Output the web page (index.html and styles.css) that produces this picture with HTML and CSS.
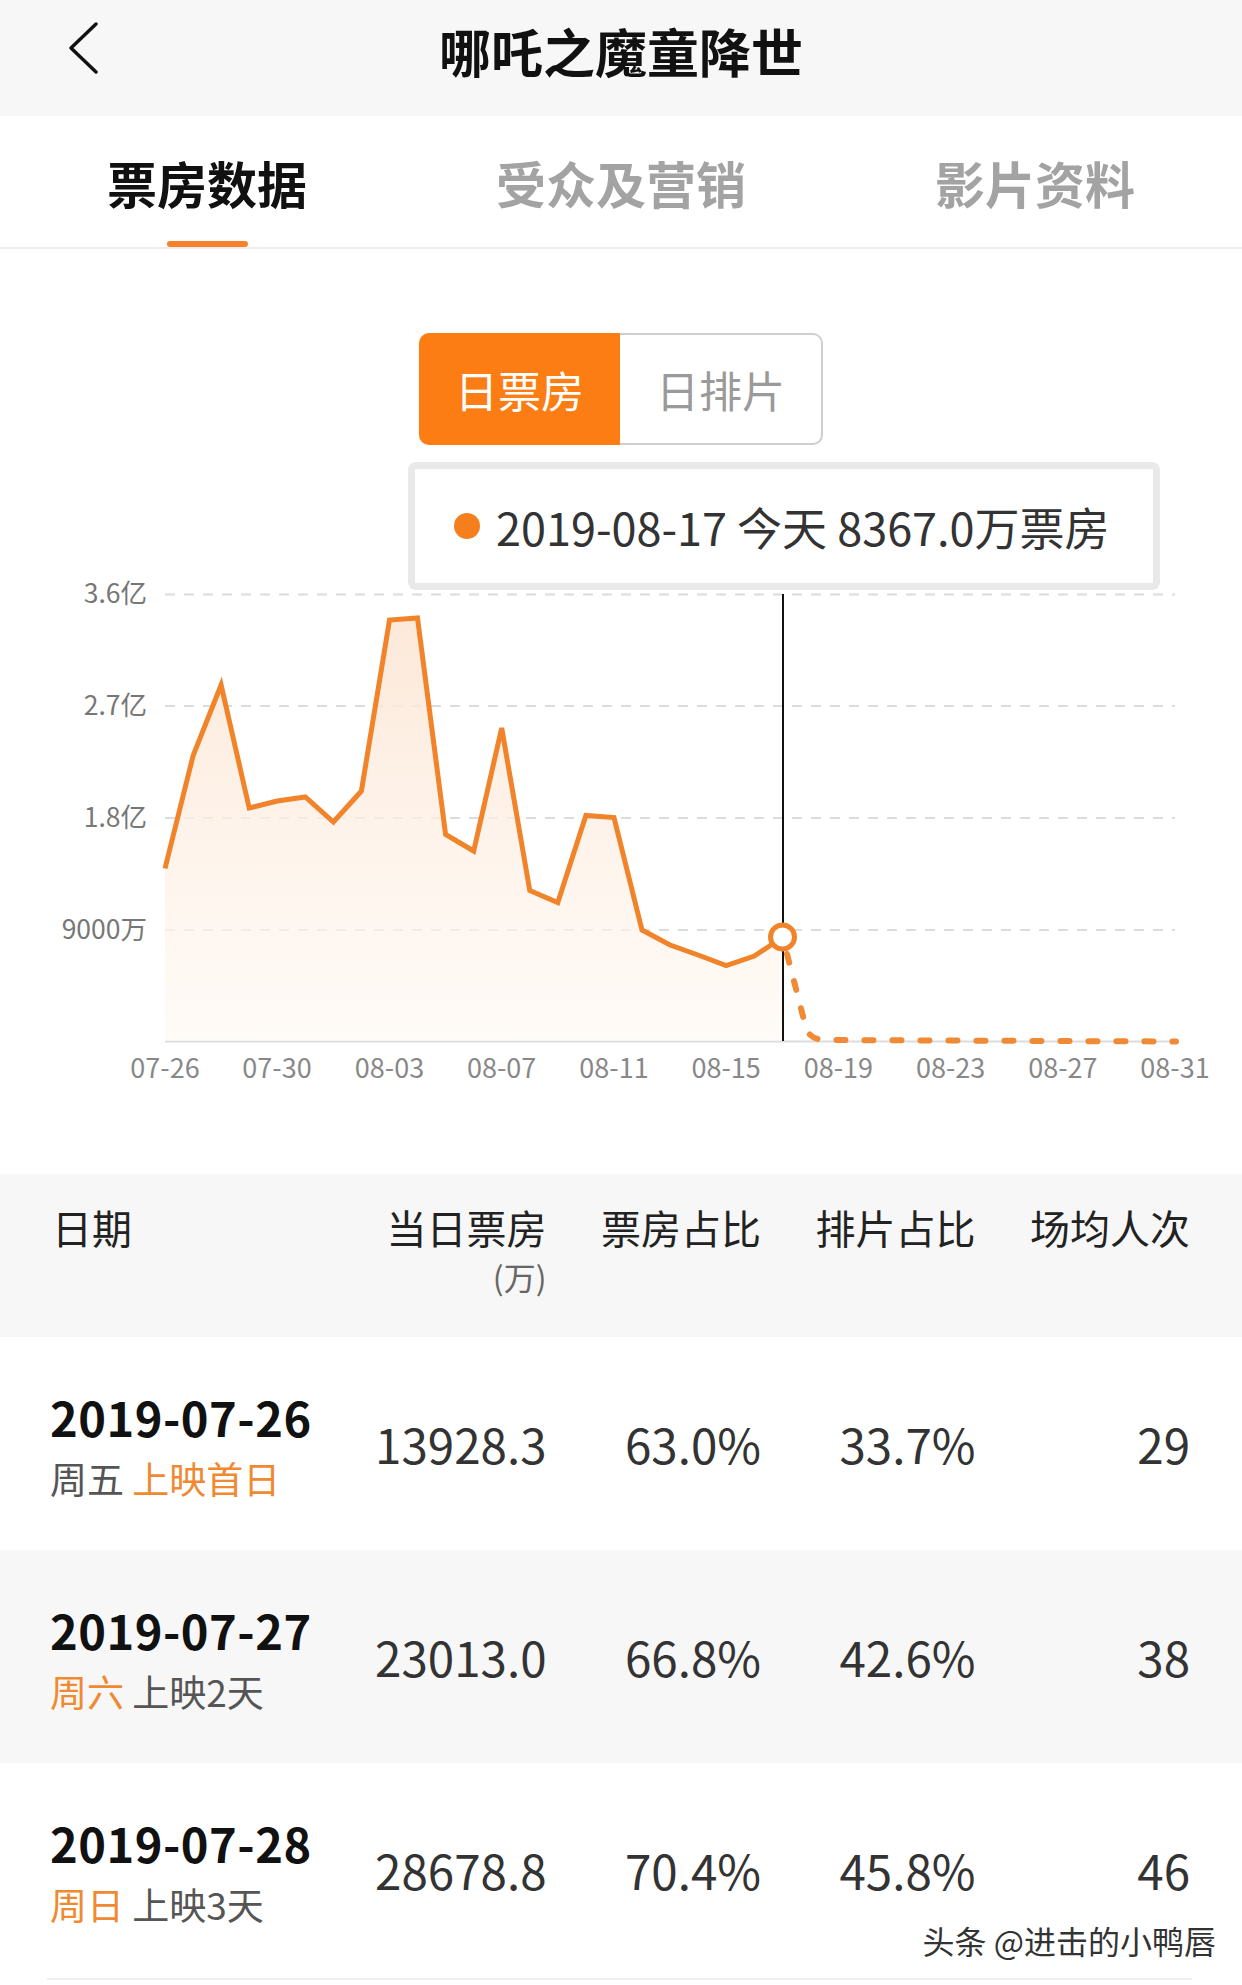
FILE: index.html
```html
<!DOCTYPE html>
<html lang="zh-CN">
<head>
  <meta charset="UTF-8" />
  <meta name="viewport" content="width=device-width, initial-scale=1.0"/>
  <title>哪吒之魔童降世</title>
  <link rel="stylesheet" href="styles.css">
</head>
<body>

  <header class="navbar">
    <a class="back" href="#">
      <svg width="30" height="56" viewBox="0 0 30 56">
        <polyline points="28,4 3,28 28,52" fill="none" stroke="#111" stroke-width="3.4" stroke-linecap="round" stroke-linejoin="round"/>
      </svg>
    </a>
    <h1 class="title">哪吒之魔童降世</h1>
    <span></span>
  </header>

  <nav class="tabs">
    <div class="tab active">票房数据</div>
    <div class="tab">受众及营销</div>
    <div class="tab">影片资料</div>
  </nav>

  <section class="chart-section">
    <div class="toggle">
      <span class="on">日票房</span>
      <span class="off">日排片</span>
    </div>

    <div class="chart-wrap">
      <div class="tooltip"><i class="dot"></i>2019-08-17 今天 8367.0万票房</div>

      <svg class="chart" width="1242" height="660" viewBox="0 445 1242 660">
        <defs>
          <linearGradient id="fade" x1="0" y1="0" x2="0" y2="1">
            <stop offset="0" stop-color="#fce6d4" stop-opacity="0.9"/>
            <stop offset="1" stop-color="#fff8f2" stop-opacity="0.6"/>
          </linearGradient>
        </defs>

        <!-- grid -->
        <g stroke="#dcdcdc" stroke-width="2" stroke-dasharray="10 9">
          <line x1="165" y1="594.5" x2="1175" y2="594.5"/>
          <line x1="165" y1="706" x2="1175" y2="706"/>
          <line x1="165" y1="818" x2="1175" y2="818"/>
          <line x1="165" y1="930" x2="1175" y2="930"/>
        </g>
        <line x1="165" y1="1041.5" x2="1176" y2="1041.5" stroke="#dcdcdc" stroke-width="2"/>

        <g class="y-labels" text-anchor="end">
          <text x="147" y="603">3.6亿</text>
          <text x="147" y="715">2.7亿</text>
          <text x="147" y="827">1.8亿</text>
          <text x="147" y="939">9000万</text>
        </g>

        <g class="x-labels" text-anchor="middle">
          <text x="165" y="1078">07-26</text>
          <text x="277" y="1078">07-30</text>
          <text x="389.5" y="1078">08-03</text>
          <text x="501.7" y="1078">08-07</text>
          <text x="614" y="1078">08-11</text>
          <text x="726.2" y="1078">08-15</text>
          <text x="838.4" y="1078">08-19</text>
          <text x="950.6" y="1078">08-23</text>
          <text x="1062.9" y="1078">08-27</text>
          <text x="1175" y="1078">08-31</text>
        </g>

        <!-- daily box office -->
        <polygon fill="url(#fade)" points="165,1041 165,868.5 193.1,755.7 221.1,685 249.2,808 277.2,801 305.3,797 333.4,822 361.4,791 389.5,620 417.5,618 445.6,834.5 473.7,851 501.7,728 529.8,890.6 557.8,902.6 585.9,815.5 614,817.6 642,930 670.1,945 698.1,955 726.2,965.6 754.3,956 782.3,937.5 782.3,1041"/>
        <polyline fill="none" stroke="#f1842a" stroke-width="5" stroke-linejoin="miter" points="165,868.5 193.1,755.7 221.1,685 249.2,808 277.2,801 305.3,797 333.4,822 361.4,791 389.5,620 417.5,618 445.6,834.5 473.7,851 501.7,728 529.8,890.6 557.8,902.6 585.9,815.5 614,817.6 642,930 670.1,945 698.1,955 726.2,965.6 754.3,956 782.3,937.5"/>

        <path d="M787 954 L806 1028 Q809 1038 822 1040 L1176 1041.5" fill="none" stroke="#f08a35" stroke-width="6" stroke-linecap="round" stroke-dasharray="9 19"/>

        <line x1="783" y1="594" x2="783" y2="1041" stroke="#111" stroke-width="2"/>
        <circle cx="782.5" cy="937" r="12" fill="#fff" stroke="#f1842a" stroke-width="5"/>
      </svg>
    </div>
  </section>

  <div class="table">
    <div class="row head">
      <div class="cell date">日期</div>
      <div class="cell">当日票房<br><small>(万)</small></div>
      <div class="cell">票房占比</div>
      <div class="cell">排片占比</div>
      <div class="cell">场均人次</div>
    </div>

    <div class="row">
      <div class="cell date">
        <b>2019-07-26</b>
        <span class="sub">周五 <em>上映首日</em></span>
      </div>
      <div class="cell">13928.3</div>
      <div class="cell">63.0%</div>
      <div class="cell">33.7%</div>
      <div class="cell">29</div>
    </div>

    <div class="row">
      <div class="cell date">
        <b>2019-07-27</b>
        <span class="sub"><em>周六</em> 上映2天</span>
      </div>
      <div class="cell">23013.0</div>
      <div class="cell">66.8%</div>
      <div class="cell">42.6%</div>
      <div class="cell">38</div>
    </div>

    <div class="row">
      <div class="cell date">
        <b>2019-07-28</b>
        <span class="sub"><em>周日</em> 上映3天</span>
      </div>
      <div class="cell">28678.8</div>
      <div class="cell">70.4%</div>
      <div class="cell">45.8%</div>
      <div class="cell">46</div>
    </div>
    <div class="table-end"></div>
  </div>

  <div class="watermark">头条 @进击的小鸭唇</div>

</body>
</html>
```

FILE: styles.css
```css
body {
  margin: 0;
  background: #fff;
  font-family: "Noto Sans CJK SC", "Noto Sans", sans-serif;
  color: #333;
  position: relative;
  overflow: hidden;
}

.navbar {
  height: 116px;
  box-sizing: border-box;
  padding-bottom: 14px;
  background: #f7f7f7;
  display: grid;
  grid-template-columns: 1fr auto 1fr;
  align-items: center;
}

.back {
  display: block;
  margin-left: 68px;
  margin-bottom: 6px;
  width: 30px;
  height: 56px;
}

.title {
  margin: 0;
  font-size: 52px;
  font-weight: bold;
  color: #111;
  line-height: 60px;
}

.tabs {
  display: flex;
  height: 131px;
  border-bottom: 2px solid #ededed;
}

.tab {
  flex: 1;
  position: relative;
  text-align: center;
  padding-top: 36px;
  font-size: 50px;
  line-height: 60px;
  font-weight: bold;
  color: #a3a3a3;
}

.tab.active {
  color: #111;
}

.tab.active::after {
  content: "";
  position: absolute;
  left: 50%;
  bottom: 0;
  width: 81px;
  height: 6px;
  margin-left: -40px;
  border-radius: 3px;
  background: #f5822a;
}

.chart-section {
  padding-top: 84px;
  padding-bottom: 69px;
}

.toggle {
  display: flex;
  width: 404px;
  height: 112px;
  margin: 0 auto;
  font-size: 43px;
}

.toggle span {
  flex: 1;
  display: flex;
  align-items: center;
  justify-content: center;
  box-sizing: border-box;
}

.toggle .on {
  background: #fb7d14;
  color: #fff;
  border-radius: 10px 0 0 10px;
}

.toggle .off {
  color: #9a9a9a;
  border: 2px solid #cfcfcf;
  border-left: none;
  border-radius: 0 10px 10px 0;
}

.chart-wrap {
  position: relative;
  height: 660px;
}

.chart {
  display: block;
}

.chart text {
  font-family: "Noto Sans CJK SC", "Noto Sans", sans-serif;
}

.y-labels text {
  font-size: 26.5px;
  fill: #777;
}

.x-labels text {
  font-size: 27px;
  fill: #888;
}

.tooltip {
  position: absolute;
  top: 17px;
  left: 408px;
  width: 752px;
  height: 128px;
  box-sizing: border-box;
  border: 7px solid #e9e9e9;
  border-radius: 8px;
  background: #fff;
  display: flex;
  align-items: center;
  padding-left: 39px;
  font-size: 45px;
  color: #333;
}

.tooltip .dot {
  width: 26px;
  height: 26px;
  border-radius: 50%;
  background: #f47f1c;
  margin-right: 16px;
}

.row {
  display: grid;
  grid-template-columns: 278px repeat(4, 214.5px);
  padding: 0 52px 0 54px;
  height: 213px;
  align-items: center;
  text-align: right;
  font-size: 47.5px;
  color: #333;
}

.row:nth-child(odd) {
  background: #f7f7f7;
}

.row .date {
  text-align: left;
  margin-left: -4px;
}

.row .date b {
  display: block;
  font-size: 47px;
  line-height: 68px;
  letter-spacing: 0.5px;
  color: #111;
}

.row .sub {
  display: block;
  font-size: 37px;
  line-height: 54px;
  color: #555;
}

.row .sub em {
  font-style: normal;
  color: #ef8a32;
}

.row.head {
  height: 163px;
  align-items: start;
  padding-top: 30px;
  box-sizing: border-box;
  font-size: 40px;
  line-height: 46px;
  color: #222;
}

.row.head .date {
  margin-left: -2px;
}

.row.head small {
  font-size: 32px;
  color: #666;
}

.table-end {
  margin: 2px 50px 0 47px;
  border-top: 2px solid #eeeeee;
  height: 10px;
}

.watermark {
  position: absolute;
  top: 1917px;
  right: 26px;
  font-size: 32px;
  color: #333;
  text-shadow: 0 0 3px #fff, 0 0 3px #fff;
}
```
